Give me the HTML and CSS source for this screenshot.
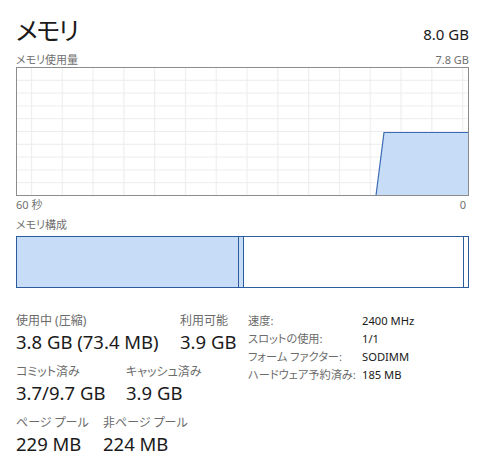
FILE: index.html
```html
<!DOCTYPE html>
<html lang="ja">
<head>
  <meta charset="UTF-8">
  <title>メモリ</title>
  <link rel="stylesheet" href="styles.css">
</head>
<body>

  <div class="page">
    <div class="header">
      <div class="title">メモリ</div>
      <div class="total">8.0 GB</div>
    </div>

    <div class="chart-caption">
      <span>メモリ使用量</span>
      <span>7.8 GB</span>
    </div>

    <div class="chart">
      <svg width="451" height="127" viewBox="0 0 451 127">
        <defs>
          <pattern id="grid" x="-1" y="-1" width="30.8" height="12.8" patternUnits="userSpaceOnUse">
            <path d="M15.5 0 V12.8 M0 0.5 H30.8" fill="none" stroke="#ececec" stroke-width="1"/>
          </pattern>
        </defs>
        <rect x="0" y="0" width="451" height="127" fill="url(#grid)"/>
        <polygon points="359,127.5 367,64.5 451,64.5 451,127.5" fill="#c7ddf7"/>
        <polyline points="359,127.5 367,64.5 451,64.5" fill="none" stroke="#3b6bb3" stroke-width="1.2"/>
      </svg>
    </div>

    <div class="chart-caption axis">
      <span>60 秒</span>
      <span>0</span>
    </div>

    <div class="chart-caption section">
      <span>メモリ構成</span>
    </div>

    <div class="composition">
      <div class="seg used" style="width: 222px"></div>
      <div class="seg modified" style="width: 5px"></div>
      <div class="seg standby"></div>
      <div class="seg free" style="width: 6px"></div>
    </div>

    <div class="stats">
      <div class="stats-left">
        <div class="stat-row">
          <div class="stat col-used">
            <div class="stat-label">使用中 (圧縮)</div>
            <div class="stat-value">3.8 GB (73.4 MB)</div>
          </div>
          <div class="stat">
            <div class="stat-label">利用可能</div>
            <div class="stat-value">3.9 GB</div>
          </div>
        </div>
        <div class="stat-row">
          <div class="stat col-commit">
            <div class="stat-label">コミット済み</div>
            <div class="stat-value">3.7/9.7 GB</div>
          </div>
          <div class="stat">
            <div class="stat-label">キャッシュ済み</div>
            <div class="stat-value">3.9 GB</div>
          </div>
        </div>
        <div class="stat-row">
          <div class="stat col-paged">
            <div class="stat-label">ページ プール</div>
            <div class="stat-value">229 MB</div>
          </div>
          <div class="stat">
            <div class="stat-label">非ページ プール</div>
            <div class="stat-value">224 MB</div>
          </div>
        </div>
      </div>

      <div class="info">
        <span class="info-label">速度:</span><span class="info-value">2400 MHz</span>
        <span class="info-label">スロットの使用:</span><span class="info-value">1/1</span>
        <span class="info-label">フォーム ファクター:</span><span class="info-value">SODIMM</span>
        <span class="info-label">ハードウェア予約済み:</span><span class="info-value">185 MB</span>
      </div>
    </div>
  </div>

</body>
</html>
```

FILE: styles.css
```css
body {
  margin: 0;
  background: #fff;
  color: #1a1a1a;
  font-family: 'Noto Sans', 'Noto Sans CJK JP', sans-serif;
  font-feature-settings: "palt";
}

.page {
  width: 453px;
  padding: 13px 0 0 16px;
}

.header {
  display: flex;
  justify-content: space-between;
  align-items: baseline;
}

.title {
  font-size: 25px;
  line-height: 34px;
  letter-spacing: -1.5px;
}

.total {
  font-size: 15px;
  line-height: 20px;
}

.chart-caption {
  display: flex;
  justify-content: space-between;
  font-size: 11px;
  line-height: 14px;
  color: #707070;
  margin-top: 6px;
}

.chart {
  height: 129px;
  border: 1px solid #8c8c8c;
  box-sizing: border-box;
}

.chart svg {
  display: block;
}

.chart-caption.axis {
  margin-top: 2px;
  padding-right: 3px;
}

.chart-caption.section {
  margin-top: 6px;
}

.composition {
  display: flex;
  height: 52px;
  margin-top: 4px;
}

.seg {
  box-sizing: border-box;
  border: 1px solid #2c5c9c;
  border-right: none;
}

.seg:last-child {
  border-right: 1px solid #2c5c9c;
}

.used {
  background: #c7ddf7;
}

.modified {
  background: #c7ddf7;
}

.standby {
  flex: 1;
  background: #fff;
}

.free {
  background: #fff;
}

.stats {
  display: grid;
  grid-template-columns: 232px 1fr;
  align-items: start;
  margin-top: 25px;
}

.stat-row {
  display: flex;
  margin-bottom: 9px;
}

.stat {
  white-space: nowrap;
}

.col-used {
  width: 164px;
}

.col-commit {
  width: 110px;
}

.col-paged {
  width: 87px;
}

.stat-label {
  font-size: 12px;
  line-height: 16px;
  color: #6b6b6b;
}

.stat-value {
  font-size: 18.5px;
  line-height: 26px;
  color: #1a1a1a;
}

.info {
  display: grid;
  grid-template-columns: 114px auto;
  font-size: 11.2px;
  line-height: 18px;
  margin-top: -1px;
}

.info-label {
  color: #6b6b6b;
}

.info-value {
  color: #1a1a1a;
}
```
